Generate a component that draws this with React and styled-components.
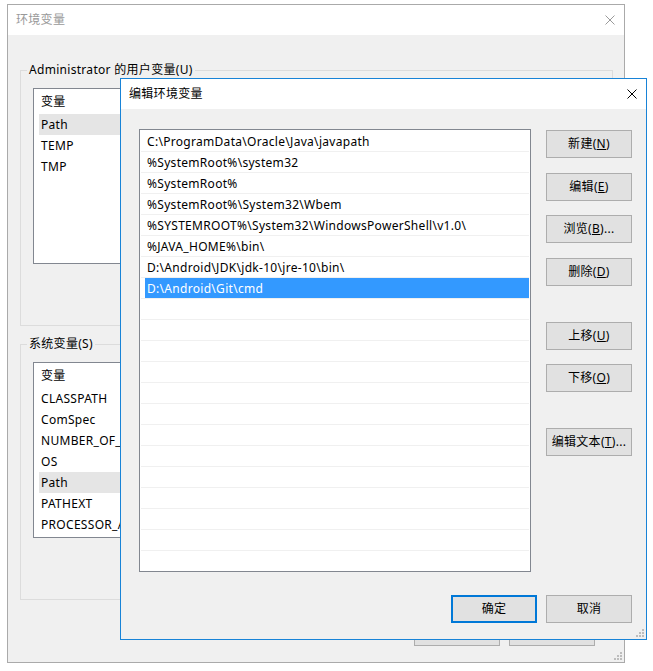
import React from "react";
import styled, { createGlobalStyle } from "styled-components";

const GlobalStyle = createGlobalStyle`
  html, body { margin: 0; padding: 0; background: #ffffff; }
  body {
    font-family: "Noto Sans", "Noto Sans CJK SC", sans-serif;
    font-size: 12px;
    letter-spacing: 0.3px;
    color: #000;
  }
  * { box-sizing: border-box; }
`;

const Desktop = styled.div`
  position: relative;
  width: 653px;
  height: 671px;
  overflow: hidden;
  background: #ffffff;
`;

const Window = styled.div`
  position: absolute;
  left: ${(p) => p.$x}px;
  top: ${(p) => p.$y}px;
  width: ${(p) => p.$w}px;
  height: ${(p) => p.$h}px;
  border: 1px solid ${(p) => (p.$active ? "#1883d7" : "#aaaaaa")};
  background: #f0f0f0;
  display: flex;
  flex-direction: column;
`;

const TitleBar = styled.div`
  height: 30px;
  flex: none;
  background: #ffffff;
  display: flex;
  align-items: center;
  justify-content: space-between;
  padding: 0 9px 0 ${(p) => p.$padLeft}px;
  color: ${(p) => (p.$active ? "#000000" : "#999999")};
  line-height: 16px;
`;

const CloseIcon = ({ color }) => (
  <svg width="10" height="10" viewBox="0 0 10 10" style={{ display: "block" }}>
    <path d="M0.5 0.5 L9.5 9.5 M9.5 0.5 L0.5 9.5" stroke={color} strokeWidth="1" fill="none" />
  </svg>
);

const Grip = styled.div`
  position: absolute;
  right: 2px;
  bottom: 2px;
  width: 8px;
  height: 8px;
`;

const GripIcon = () => (
  <svg width="8" height="8" viewBox="0 0 8 8" style={{ display: "block" }}>
    <g fill="#bdbdbd">
      <rect x="6" y="0" width="2" height="2" />
      <rect x="3" y="3" width="2" height="2" />
      <rect x="6" y="3" width="2" height="2" />
      <rect x="0" y="6" width="2" height="2" />
      <rect x="3" y="6" width="2" height="2" />
      <rect x="6" y="6" width="2" height="2" />
    </g>
  </svg>
);

/* ---------- back window ---------- */

const BackBody = styled.div`
  flex: 1;
  display: flex;
  flex-direction: column;
  padding: 27px 11px 16px 12px;
`;

const Group = styled.fieldset`
  margin: ${(p) => p.$mt}px 0 0 0;
  padding: 10px 12px 0 12px;
  border: 1px solid #dcdcdc;
  min-width: 0;
  height: ${(p) => p.$h}px;
`;

const Legend = styled.legend`
  padding: 0 2px;
  margin-left: -6px;
  line-height: 16px;
  color: #000;
`;

const VarList = styled.div`
  height: 176px;
  border: 1px solid #828790;
  background: #ffffff;
  overflow: hidden;
`;

const VarHeader = styled.div`
  height: 25px;
  line-height: 26px;
  padding-left: 7px;
`;

const VarRow = styled.div`
  height: 21px;
  line-height: 22px;
  margin-left: 5px;
  padding-left: 2px;
  background: ${(p) => (p.$sel ? "#e5e5e5" : "transparent")};
  white-space: nowrap;
`;

const HiddenButtons = styled.div`
  display: flex;
  justify-content: flex-end;
  gap: 9px;
  margin-top: 20px;
`;

const BackFooter = styled.div`
  display: flex;
  justify-content: flex-end;
  gap: 9px;
  margin-top: 18px;
  padding-right: 18px;
`;

const Button = styled.div`
  width: 86px;
  height: 28px;
  flex: none;
  margin-top: ${(p) => p.$mt || 0}px;
  background: #e1e1e1;
  border: ${(p) => (p.$default ? "2px solid #0078d7" : "1px solid #adadad")};
  display: flex;
  align-items: center;
  justify-content: center;
  line-height: 16px;
  white-space: nowrap;
  color: #000;
`;

/* ---------- front window ---------- */

const FrontBody = styled.div`
  flex: 1;
  display: flex;
  flex-direction: column;
  padding: 20px 14px 16px 18px;
`;

const Main = styled.div`
  display: grid;
  grid-template-columns: 392px 86px;
  column-gap: 15px;
`;

const PathList = styled.div`
  height: 443px;
  border: 1px solid #828790;
  background: #ffffff;
  padding-top: 1px;
  overflow: hidden;
`;

const PathRow = styled.div`
  height: 21px;
  margin: 0 1px;
  padding-left: 4px;
  border-bottom: 1px solid #f0f0f0;
  display: flex;
`;

const PathCell = styled.div`
  flex: 1;
  height: 20px;
  line-height: 22px;
  overflow: hidden;
  padding-left: 2px;
  white-space: nowrap;
  background: ${(p) => (p.$sel ? "#3399ff" : "transparent")};
  color: ${(p) => (p.$sel ? "#ffffff" : "#000000")};
`;

const SideButtons = styled.div`
  display: flex;
  flex-direction: column;
  padding-top: 1px;
`;

const Footer = styled.div`
  display: flex;
  justify-content: flex-end;
  gap: 9px;
  margin-top: 23px;
`;

const Mn = ({ children }) => <u>{children}</u>;

const paths = [
  "C:\\ProgramData\\Oracle\\Java\\javapath",
  "%SystemRoot%\\system32",
  "%SystemRoot%",
  "%SystemRoot%\\System32\\Wbem",
  "%SYSTEMROOT%\\System32\\WindowsPowerShell\\v1.0\\",
  "%JAVA_HOME%\\bin\\",
  "D:\\Android\\JDK\\jdk-10\\jre-10\\bin\\",
  "D:\\Android\\Git\\cmd",
];
const SELECTED = 7;
const TOTAL_ROWS = 21;

const userVars = ["Path", "TEMP", "TMP"];
const sysVars = ["CLASSPATH", "ComSpec", "NUMBER_OF_PROCESSORS", "OS", "Path", "PATHEXT", "PROCESSOR_ARCHITECTURE"];

export default function App() {
  const rows = Array.from({ length: TOTAL_ROWS }, (_, i) => paths[i] || "");
  return (
    <>
      <GlobalStyle />
      <Desktop>
        <Window $x={7} $y={4} $w={618} $h={659}>
          <TitleBar $padLeft={8}>
            <span>环境变量</span>
            <CloseIcon color="#9a9a9a" />
          </TitleBar>
          <BackBody>
            <Group $mt={0} $h={264}>
              <Legend>Administrator 的用户变量(U)</Legend>
              <VarList>
                <VarHeader>变量</VarHeader>
                {userVars.map((v) => (
                  <VarRow key={v} $sel={v === "Path"}>{v}</VarRow>
                ))}
              </VarList>
              <HiddenButtons>
                <Button>新建(<Mn>N</Mn>)...</Button>
                <Button>编辑(<Mn>E</Mn>)...</Button>
                <Button>删除(<Mn>D</Mn>)</Button>
              </HiddenButtons>
            </Group>
            <Group $mt={10} $h={264}>
              <Legend>系统变量(S)</Legend>
              <VarList>
                <VarHeader>变量</VarHeader>
                {sysVars.map((v, i) => (
                  <VarRow key={v + i} $sel={i === 4}>{v}</VarRow>
                ))}
              </VarList>
              <HiddenButtons>
                <Button>新建(<Mn>W</Mn>)...</Button>
                <Button>编辑(<Mn>I</Mn>)...</Button>
                <Button>删除(<Mn>L</Mn>)</Button>
              </HiddenButtons>
            </Group>
            <BackFooter>
              <Button>确定</Button>
              <Button>取消</Button>
            </BackFooter>
          </BackBody>
          <Grip><GripIcon /></Grip>
        </Window>

        <Window $x={120} $y={78} $w={527} $h={562} $active>
          <TitleBar $padLeft={8} $active>
            <span>编辑环境变量</span>
            <CloseIcon color="#000000" />
          </TitleBar>
          <FrontBody>
            <Main>
              <PathList>
                {rows.map((p, i) => (
                  <PathRow key={i}>
                    <PathCell $sel={i === SELECTED}>{p}</PathCell>
                  </PathRow>
                ))}
              </PathList>
              <SideButtons>
                <Button>新建(<Mn>N</Mn>)</Button>
                <Button $mt={15}>编辑(<Mn>E</Mn>)</Button>
                <Button $mt={14}>浏览(<Mn>B</Mn>)...</Button>
                <Button $mt={15}>删除(<Mn>D</Mn>)</Button>
                <Button $mt={36}>上移(<Mn>U</Mn>)</Button>
                <Button $mt={14}>下移(<Mn>O</Mn>)</Button>
                <Button $mt={36}>编辑文本(<Mn>T</Mn>)...</Button>
              </SideButtons>
            </Main>
            <Footer>
              <Button $default>确定</Button>
              <Button>取消</Button>
            </Footer>
          </FrontBody>
          <Grip><GripIcon /></Grip>
        </Window>
      </Desktop>
    </>
  );
}
